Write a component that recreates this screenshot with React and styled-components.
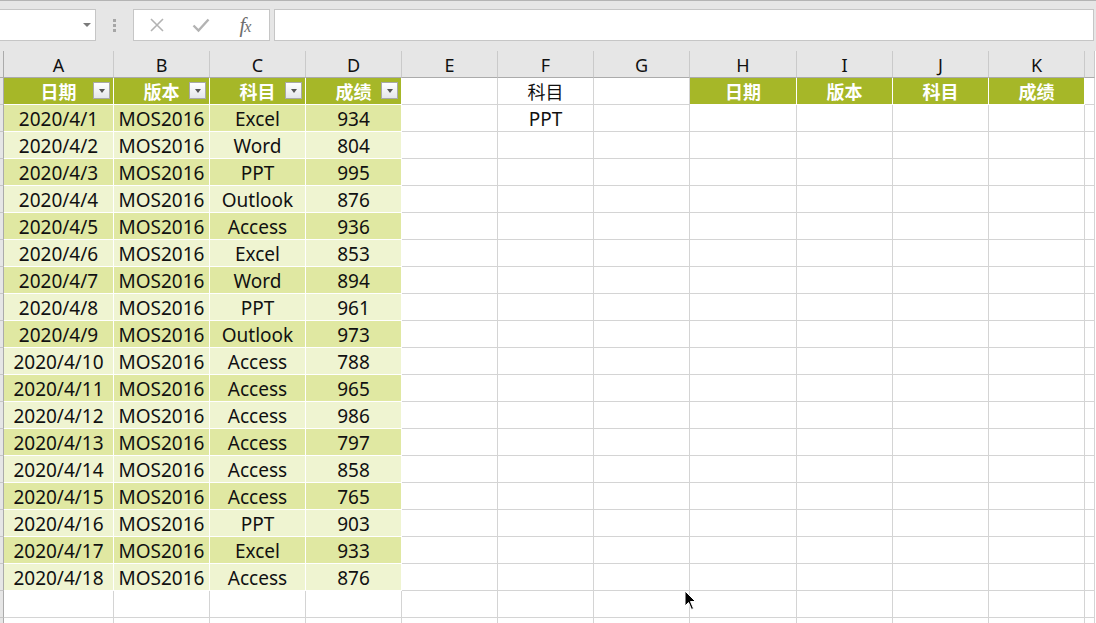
import React from "react";
import styled, { createGlobalStyle } from "styled-components";

const GlobalStyle = createGlobalStyle`
  body {
    margin: 0;
    overflow: hidden;
    font-family: "Noto Sans", "Noto Sans CJK SC", sans-serif;
  }
`;

const columns = [
  { name: "A", width: 110 },
  { name: "B", width: 96 },
  { name: "C", width: 96 },
  { name: "D", width: 96 },
  { name: "E", width: 96 },
  { name: "F", width: 96 },
  { name: "G", width: 96 },
  { name: "H", width: 107 },
  { name: "I", width: 96 },
  { name: "J", width: 96 },
  { name: "K", width: 96 },
  { name: "", width: 10 },
];

const data = [
  ["2020/4/1", "MOS2016", "Excel", 934],
  ["2020/4/2", "MOS2016", "Word", 804],
  ["2020/4/3", "MOS2016", "PPT", 995],
  ["2020/4/4", "MOS2016", "Outlook", 876],
  ["2020/4/5", "MOS2016", "Access", 936],
  ["2020/4/6", "MOS2016", "Excel", 853],
  ["2020/4/7", "MOS2016", "Word", 894],
  ["2020/4/8", "MOS2016", "PPT", 961],
  ["2020/4/9", "MOS2016", "Outlook", 973],
  ["2020/4/10", "MOS2016", "Access", 788],
  ["2020/4/11", "MOS2016", "Access", 965],
  ["2020/4/12", "MOS2016", "Access", 986],
  ["2020/4/13", "MOS2016", "Access", 797],
  ["2020/4/14", "MOS2016", "Access", 858],
  ["2020/4/15", "MOS2016", "Access", 765],
  ["2020/4/16", "MOS2016", "PPT", 903],
  ["2020/4/17", "MOS2016", "Excel", 933],
  ["2020/4/18", "MOS2016", "Access", 876],
];

const headers = ["日期", "版本", "科目", "成绩"];

const Page = styled.div`
  position: relative;
  width: 1096px;
  height: 623px;
  overflow: hidden;
  background: #fff;
`;

const FormulaBar = styled.div`
  display: flex;
  align-items: flex-start;
  height: 51px;
  padding-top: 8px;
  box-sizing: border-box;
  border-top: 1px solid #b4b4b4;
  background: #e6e6e6;
`;

const NameBox = styled.div`
  width: 97px;
  height: 32px;
  margin-left: -1px;
  box-sizing: border-box;
  border: 1px solid #c6c6c6;
  background: #fff;
  display: flex;
  align-items: center;
  justify-content: flex-end;
  padding-right: 4px;
`;

const Caret = styled.span`
  width: 0;
  height: 0;
  border-left: 4px solid transparent;
  border-right: 4px solid transparent;
  border-top: 4px solid #7a7a7a;
`;

const Grip = styled.div`
  width: 37px;
  height: 32px;
  display: flex;
  flex-direction: column;
  align-items: center;
  justify-content: center;
  gap: 2px;
  span {
    width: 3px;
    height: 3px;
    background: #a6a6a6;
  }
`;

const FuncBox = styled.div`
  width: 137px;
  height: 32px;
  box-sizing: border-box;
  border: 1px solid #c6c6c6;
  background: #fff;
  display: flex;
  align-items: center;
  padding-left: 11px;
  gap: 20px;
`;

const FuncIcon = styled.span`
  width: 24px;
  display: flex;
  justify-content: center;
  align-items: center;
`;

const Fx = styled.span`
  font-family: "Liberation Serif", serif;
  font-style: italic;
  font-size: 21px;
  line-height: 1;
  color: #6e6e6e;
  letter-spacing: -1px;
  small {
    font-size: 16px;
  }
`;

const FormulaInput = styled.div`
  width: 820px;
  height: 32px;
  margin-left: 4px;
  box-sizing: border-box;
  border: 1px solid #c6c6c6;
  background: #fff;
`;

const Row = styled.div`
  display: flex;
  height: 27px;
`;

const RowHead = styled.div`
  width: 4px;
  flex: none;
  box-sizing: border-box;
  background: #e6e6e6;
  border-right: 1px solid #ababab;
  border-bottom: 1px solid ${(p) => (p.$top ? "#ababab" : "#c6c6c6")};
`;

const ColHead = styled.div`
  flex: none;
  box-sizing: border-box;
  background: #e6e6e6;
  border-right: 1px solid #cacaca;
  border-bottom: 1px solid #ababab;
  display: flex;
  align-items: center;
  justify-content: center;
  padding-top: 1px;
  font-size: 18px;
  color: #111;
`;

const cellColors = {
  head: "#a6b728",
  odd: "#e0e8a2",
  even: "#eff4d1",
  plain: "#fff",
};

const Cell = styled.div`
  position: relative;
  flex: none;
  box-sizing: border-box;
  height: 27px;
  padding-top: ${(p) => (p.$cjk ? "0" : "2px")};
  background: ${(p) => cellColors[p.$kind]};
  border-right: 1px solid ${(p) => (p.$kind === "plain" ? "#d4d4d4" : "#fff")};
  border-bottom: 1px solid ${(p) => (p.$kind === "plain" ? "#d4d4d4" : "#fff")};
  display: flex;
  align-items: center;
  justify-content: center;
  font-size: ${(p) => (p.$cjk ? "18px" : "19px")};
  white-space: nowrap;
  color: ${(p) => (p.$kind === "head" ? "#fff" : "#111")};
  font-weight: ${(p) => (p.$kind === "head" ? 700 : 400)};
  font-family: ${(p) =>
    p.$cjk ? '"Noto Sans CJK SC", sans-serif' : '"Noto Sans", "Noto Sans CJK SC", sans-serif'};
`;

const FilterButton = styled.span`
  position: absolute;
  right: 3px;
  top: 4px;
  width: 17px;
  height: 17px;
  box-sizing: border-box;
  border: 1px solid #a9a9a9;
  background: linear-gradient(#ffffff, #e4e6ea);
  display: flex;
  align-items: center;
  justify-content: center;
  &::after {
    content: "";
    width: 0;
    height: 0;
    margin-top: 1px;
    border-left: 3.5px solid transparent;
    border-right: 3.5px solid transparent;
    border-top: 4px solid #555;
  }
`;

const Pointer = styled.svg`
  position: absolute;
  left: 684px;
  top: 590px;
`;

function cellFor(r, c) {
  // r: 1-based sheet row, c: column index
  if (r === 1) {
    if (c <= 3) return { kind: "head", text: headers[c], filter: true, cjk: true };
    if (c >= 7 && c <= 10) return { kind: "head", text: headers[c - 7], cjk: true };
    if (c === 5) return { kind: "plain", text: "科目", cjk: true };
    return { kind: "plain" };
  }
  const d = data[r - 2];
  if (d && c <= 3) {
    return { kind: r % 2 === 0 ? "odd" : "even", text: d[c] };
  }
  if (r === 2 && c === 5) return { kind: "plain", text: "PPT" };
  return { kind: "plain" };
}

export default function App() {
  const rows = Array.from({ length: 21 }, (_, i) => i + 1);
  return (
    <Page>
      <GlobalStyle />
      <FormulaBar>
        <NameBox>
          <Caret />
        </NameBox>
        <Grip>
          <span />
          <span />
          <span />
        </Grip>
        <FuncBox>
          <FuncIcon>
            <svg width="16" height="16" viewBox="0 0 16 16">
              <path d="M2 2L14 14M14 2L2 14" stroke="#b3b3b3" strokeWidth="1.6" fill="none" />
            </svg>
          </FuncIcon>
          <FuncIcon>
            <svg width="18" height="16" viewBox="0 0 18 16">
              <path d="M1.5 8.5L6.5 13.5L16.5 2.5" stroke="#b3b3b3" strokeWidth="2.4" fill="none" />
            </svg>
          </FuncIcon>
          <FuncIcon>
            <Fx>
              f<small>x</small>
            </Fx>
          </FuncIcon>
        </FuncBox>
        <FormulaInput />
      </FormulaBar>

      <Row>
        <RowHead $top />
        {columns.map((col) => (
          <ColHead key={col.name || "L"} style={{ width: col.width }}>
            {col.name}
          </ColHead>
        ))}
      </Row>

      {rows.map((r) => (
        <Row key={r}>
          <RowHead />
          {columns.map((col, c) => {
            const cell = cellFor(r, c);
            return (
              <Cell key={c} $kind={cell.kind} $cjk={cell.cjk} style={{ width: col.width }}>
                {cell.text}
                {cell.filter && <FilterButton />}
              </Cell>
            );
          })}
        </Row>
      ))}

      <Pointer width="13" height="22" viewBox="0 0 13 22">
        <path d="M1 1L1 16L4.5 12.5L7.5 19.5L9.5 18.5L6.5 11.5L11.5 11.5Z" fill="#000" stroke="#fff" strokeWidth="1" />
      </Pointer>
    </Page>
  );
}
